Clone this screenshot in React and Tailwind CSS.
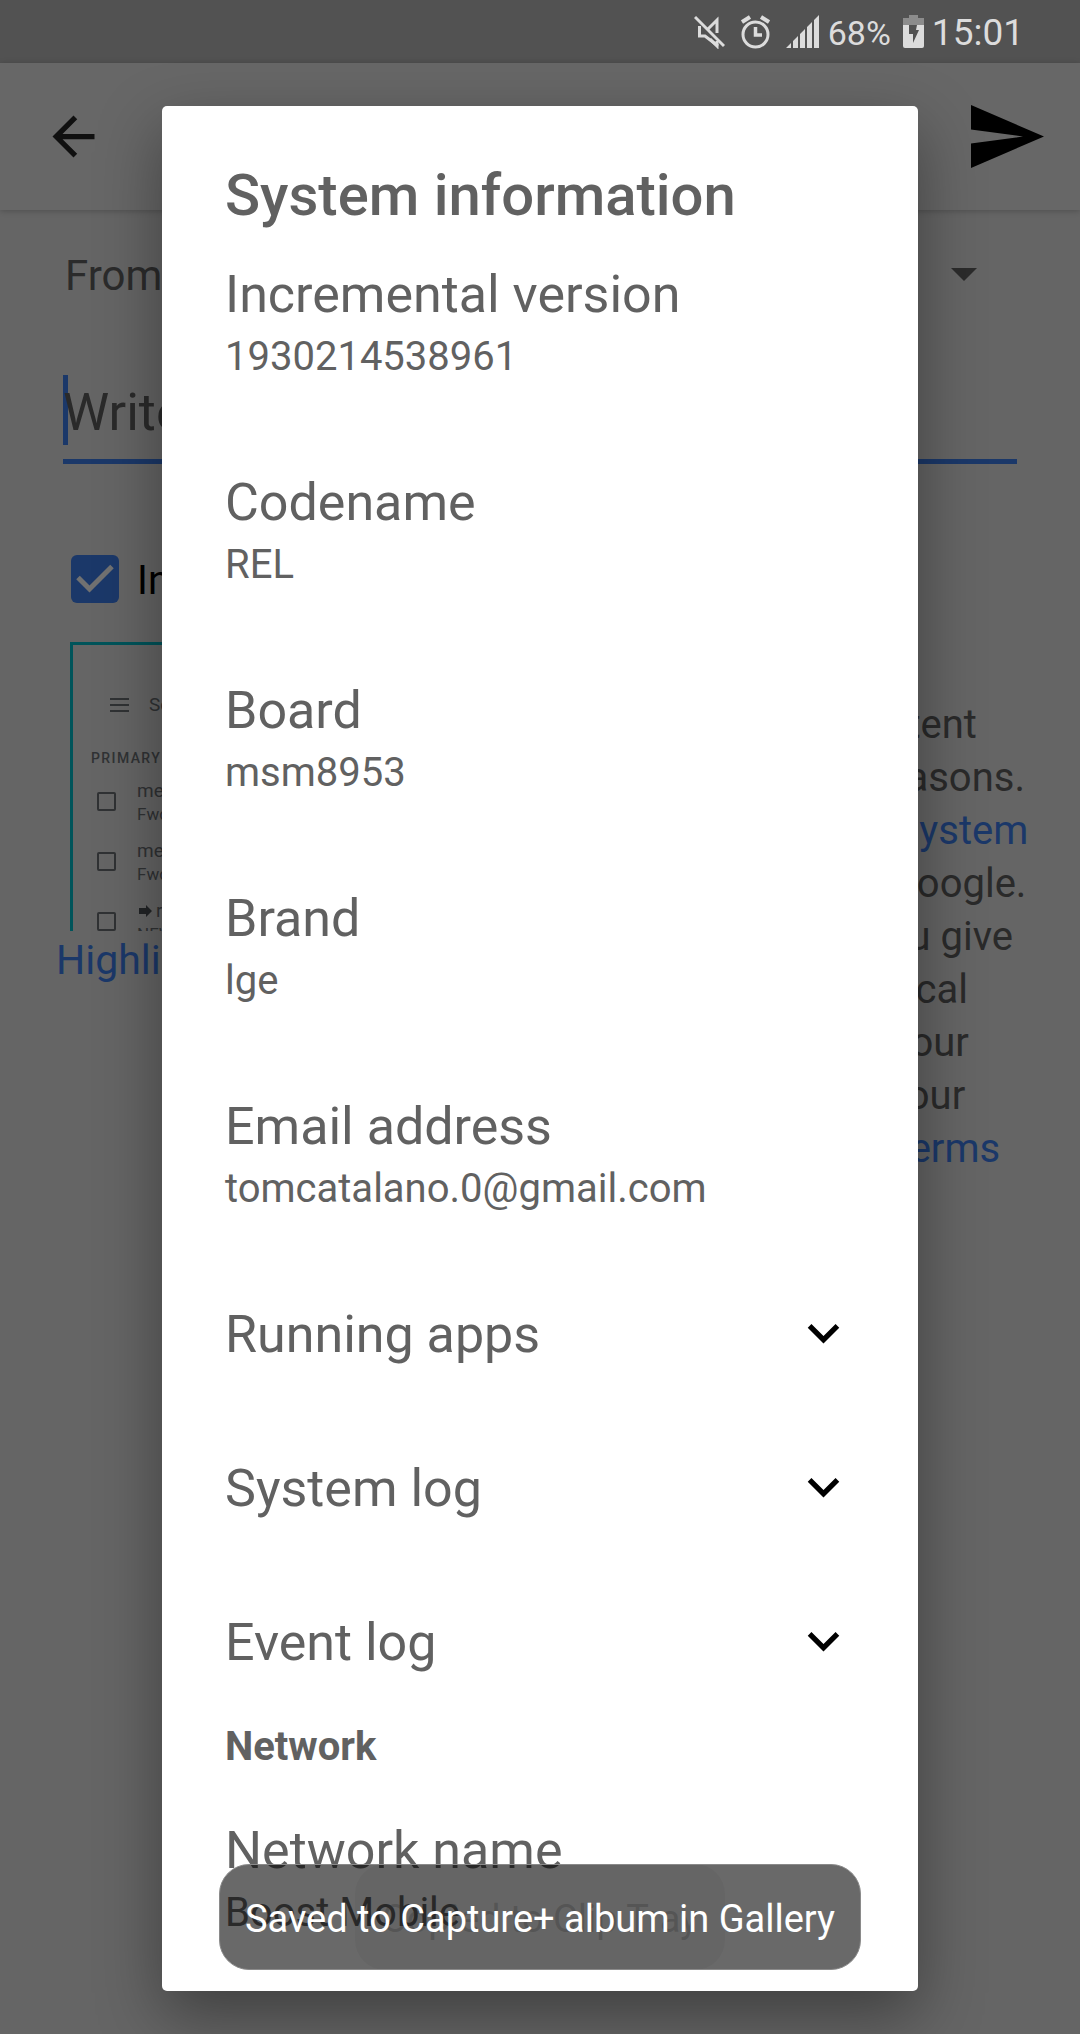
import React from "react";

const details = [
  ["Incremental version", "1930214538961"],
  ["Codename", "REL"],
  ["Board", "msm8953"],
  ["Brand", "lge"],
  ["Email address", "tomcatalano.0@gmail.com"],
];

const logs = ["Running apps", "System log", "Event log"];

function StatusBar() {
  return (
    <div className="flex h-[63px] items-center justify-end bg-[#525252] pr-14 text-[#dcdcdc]">
      <svg className="mr-4 h-[34px] w-[31px]" viewBox="0 0 31 34" fill="none" stroke="currentColor" aria-label="Muted">
        <path d="M1 2 30 31" strokeWidth="3" />
        <path d="M14 14 23 5V18M23 26V31L16 24" strokeWidth="3" />
        <path d="M5.500 11V21H11L24 31" strokeWidth="3" />
      </svg>
      <svg className="mr-4 h-[34px] w-[29px]" viewBox="0 0 29 34" fill="none" stroke="currentColor" aria-label="Alarm">
        <circle cx="14.500" cy="19.500" r="12.500" strokeWidth="3" />
        <path d="M14.500 12V20H21" strokeWidth="3.500" />
        <path d="M1 7 9 2M28 7 20 2" strokeWidth="4" />
      </svg>
      <svg className="mr-2 h-[34px] w-[34px]" viewBox="0 0 34 34" fill="currentColor" aria-label="Signal">
        <path d="M0 33 5 28V33zM7 26 12 21V33H7zM14 19 19 14V33H14zM21 12 26 7V33H21zM28 5 33 0V33H28z" />
      </svg>
      <span className="pt-[2px] text-[34px] leading-[40px]">68%</span>
      <svg className="mr-2 ml-3 h-[34px] w-[21px]" viewBox="0 0 21 34" aria-label="Charging">
        <path d="M6 0H15V3H21V10H0V3H6z" fill="#8c8c8c" />
        <path d="M0 10H21V31Q21 33 19 33H2Q0 33 0 31z" fill="currentColor" />
        <path d="M6 10H14L13 15H16L10 28V19H6z" fill="#525252" />
      </svg>
      <span className="pt-[2px] text-[37px] leading-[40px]">15:01</span>
    </div>
  );
}

function Mail({ title, body, arrow }) {
  return (
    <li className="flex h-[60px] items-start">
      <span className="mt-3 mr-[21px] h-[19px] w-[19px] shrink-0 rounded-xs border-2 border-[#303234]" />
      <span className="flex flex-col whitespace-nowrap">
        <span className="flex items-center gap-1 text-[19px] leading-[22px]">
          {arrow && (
            <svg className="ml-[2px] h-3 w-[13px]" viewBox="0 0 13 12" fill="#222426" aria-hidden="true">
              <path d="M0 3H7V0L13 6 7 12V9H0z" />
            </svg>
          )}
          {title}
        </span>
        <span className="text-[17px] leading-[24px]">{body}</span>
      </span>
    </li>
  );
}

function Thumbnail() {
  return (
    <div className="h-[289px] w-[164px] shrink-0 overflow-hidden border-t-3 border-l-3 border-[#00545a] text-[#303234]">
      <div className="mt-[50px] flex h-5 items-center gap-5 pl-[37px]">
        <svg className="h-[14px] w-[19px] shrink-0" viewBox="0 0 19 14" stroke="#303234" strokeWidth="2" aria-hidden="true">
          <path d="M0 1H19M0 7H19M0 13H19" />
        </svg>
        <span className="text-[19px]">Search</span>
      </div>
      <div className="mt-[33px] pl-[18px] text-[14px] leading-[20px] font-medium tracking-widest">PRIMARY</div>
      <ul className="mt-3 pl-6">
        <Mail title="me" body="Fwd: Photos" />
        <Mail title="me" body="Fwd: Photos" />
        <Mail title="r" body="NEW" arrow />
      </ul>
    </div>
  );
}

function FeedbackPage() {
  return (
    <div className="flex min-h-screen flex-col bg-[#656565]">
      <StatusBar />
      <header className="flex h-[147px] items-center justify-between bg-[#676767] pr-9 pl-[42px] shadow-[0_1px_6px_rgba(0,0,0,0.22)]">
        <button aria-label="Back">
          <svg className="h-[63px] w-[63px]" viewBox="0 0 24 24" fill="#101010">
            <path d="M20 11H7.830l5.590-5.590L12 4l-8 8 8 8 1.410-1.410L7.830 13H20v-2z" />
          </svg>
        </button>
        <button aria-label="Send">
          <svg className="h-[63px] w-[73px]" viewBox="0 0 73 63" fill="#000">
            <path d="M0 0 73 31.500 0 63V38.500L52 31.500 0 24.500z" />
          </svg>
        </button>
      </header>
      <main className="flex flex-col px-[63px]">
        <div className="flex h-[130px] items-center pl-[2px] text-[42px] text-[#2b2b2b]">
          <label htmlFor="from">From:</label>
          <select id="from" className="ml-3 h-16 min-w-0 flex-1 appearance-none bg-transparent">
            <option>tomcatalano.0@gmail.com</option>
          </select>
          <svg className="mr-10 mb-[2px] h-[13px] w-[26px]" viewBox="0 0 26 13" fill="#2b2b2b" aria-hidden="true">
            <path d="M0 0H26L13 13z" />
          </svg>
        </div>
        <div className="relative mt-[25px]">
          <span className="absolute top-[10px] left-0 h-[70px] w-[5px] bg-[#1b3869]" />
          <input
            aria-label="Feedback"
            placeholder="Write your feedback"
            className="relative h-[99px] w-full border-b-5 border-[#1b3869] bg-transparent text-[52px] outline-none placeholder:text-[#2a2a2a]"
          />
        </div>
        <label className="mt-[91px] ml-2 flex h-12 items-center text-[40px] text-black">
          <span className="relative mr-[18px] h-12 w-12">
            <input type="checkbox" defaultChecked className="h-12 w-12 appearance-none rounded-md bg-[#1b3869]" />
            <svg className="pointer-events-none absolute inset-0 h-12 w-12" viewBox="0 0 48 48" fill="none" stroke="#717171" strokeWidth="5" aria-hidden="true">
              <path d="M7 22.500 18.500 34 41 11.500" />
            </svg>
          </span>
          <span className="pt-1">Include screenshot</span>
        </label>
        <div className="mt-[39px] flex">
          <div className="ml-[7px] flex w-[164px] shrink-0 flex-col">
            <Thumbnail />
            <a href="#highlight" className="-ml-[14px] text-[41px] leading-[58px] whitespace-nowrap text-[#1b3869]">
              Highlight
            </a>
          </div>
          <p className="mt-14 ml-auto w-[461px] text-[40px] leading-[53px] whitespace-nowrap text-[#2a2a2a]">
            See here to edit content
            <br />
            changes for legal reasons.
            <br />
            Some account and <a href="#system" className="text-[#1b3869]">system</a>
            <br />
            info will be sent to Google.
            <br />
            We’ll use the info you give
            <br />
            us to address technical
            <br />
            issues and improve our
            <br />
            services, subject to our
            <br />
            <a href="#terms" className="text-[#1b3869]">Privacy Policy and Terms</a>
          </p>
        </div>
      </main>
    </div>
  );
}

function Detail({ name, value }) {
  return (
    <div className="py-[42px]">
      <dt className="text-[52px] leading-[64px]">{name}</dt>
      <dd className="text-[40px] leading-[60px]">{value}</dd>
    </div>
  );
}

function SystemDialog() {
  return (
    <div className="absolute inset-0 flex flex-col px-[15%] pt-[106px] pb-[43px]">
      <section
        role="dialog"
        aria-labelledby="dialog-title"
        className="flex-1 overflow-hidden rounded-[5px] bg-white px-[63px] pt-16 text-[#616161] shadow-[0_24px_64px_rgba(0,0,0,0.38)]"
      >
        <h1 id="dialog-title" className="text-[58px] leading-[51px] font-medium">System information</h1>
        <dl>
          {details.map(([name, value]) => (
            <Detail key={name} name={name} value={value} />
          ))}
        </dl>
        <div className="flex flex-col gap-[90px] py-[42px]">
          {logs.map((name) => (
            <button key={name} className="flex items-center justify-between text-left text-[52px] leading-[64px]">
              {name}
              <svg className="h-[63px] w-[63px]" viewBox="0 1 24 24" fill="#000" aria-hidden="true">
                <path d="M16.590 8.590 12 13.170 7.410 8.590 6 10l6 6 6-6z" />
              </svg>
            </button>
          ))}
        </div>
        <h2 className="text-[40px] leading-[60px] font-bold">Network</h2>
        <dl>
          <Detail name="Network name" value="Boost Mobile" />
        </dl>
      </section>
    </div>
  );
}

function Toasts() {
  return (
    <div className="pointer-events-none absolute inset-x-0 bottom-16 grid place-items-center text-[38px] leading-[46px] whitespace-nowrap">
      <div aria-hidden="true" className="col-start-1 row-start-1 rounded-[30px] bg-black/4 px-[27px] pt-8 pb-7 text-[#6d6d6d]/30">
        Copied to Clip Tray
      </div>
      <div role="status" className="col-start-1 row-start-1 rounded-[30px] border border-[#8a8a8a] bg-[#050505]/60 px-[25px] pt-[31px] pb-[27px] text-white">
        Saved to Capture+ album in Gallery
      </div>
    </div>
  );
}

export default function App() {
  return (
    <div className="relative overflow-hidden font-[Roboto,sans-serif]">
      <FeedbackPage />
      <SystemDialog />
      <Toasts />
    </div>
  );
}
